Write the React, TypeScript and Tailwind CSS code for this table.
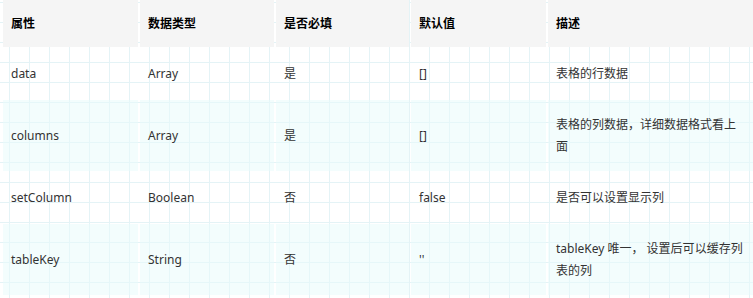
const headers = ['属性', '数据类型', '是否必填', '默认值', '描述']

const rows = [
  ['data', 'Array', '是', '[]', '表格的行数据'],
  ['columns', 'Array', '是', '[]', '表格的列数据，详细数据格式看上面'],
  ['setColumn', 'Boolean', '否', 'false', '是否可以设置显示列'],
  ['tableKey', 'String', '否', "''", 'tableKey 唯一， 设置后可以缓存列表的列'],
]

const font = "font-['Noto_Sans','Noto_Sans_CJK_SC',sans-serif]"

export default function App() {
  return (
    <div
      className={`h-[298px] w-[753px] overflow-hidden bg-white bg-[linear-gradient(to_right,#e4f3f6_1px,transparent_1px),linear-gradient(to_bottom,#e4f3f6_1px,transparent_1px)] bg-[size:20px_20px] bg-[position:9px_2px] pl-[3px] ${font}`}
    >
      <div className="grid grid-cols-[135px_134px_133px_135px_1fr] gap-[2px] text-[12px]">
        {headers.map((h) => (
          <div
            key={h}
            className="flex items-center bg-[#f5f5f5] px-2 py-[12.5px] font-bold leading-[22px] text-black"
          >
            {h}
          </div>
        ))}
        {rows.map((row, i) =>
          row.map((cell, j) => (
            <div
              key={`${i}-${j}`}
              className={`flex items-center px-2 py-[13.5px] leading-[22px] text-[#333] ${
                i % 2 === 1 ? 'bg-[#e8fbfb]/50' : ''
              }`}
            >
              {cell}
            </div>
          ))
        )}
      </div>
    </div>
  )
}
